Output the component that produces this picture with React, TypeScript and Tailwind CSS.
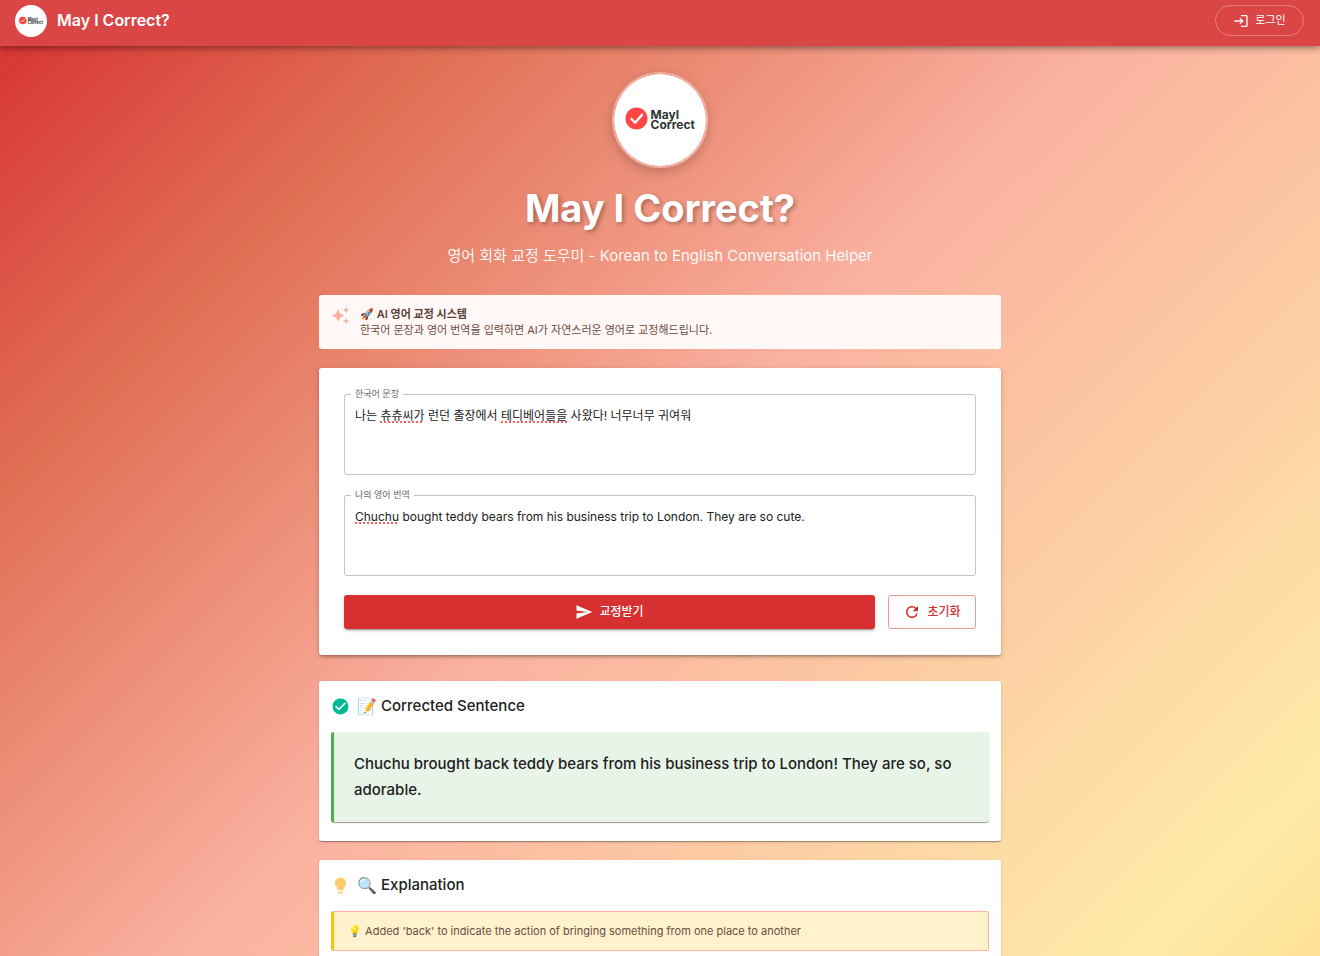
import React, { useState } from "react";
import { MdLogin, MdSend, MdRefresh, MdAutoAwesome, MdCheckCircle, MdLightbulb } from "react-icons/md";

const cardBase = "rounded-[3px] bg-white";
const lowShadow =
  "shadow-[0_2px_1px_-1px_rgba(0,0,0,0.2),0_1px_1px_0_rgba(0,0,0,0.14),0_1px_3px_0_rgba(0,0,0,0.12)]";
const highShadow =
  "shadow-[0_3px_3px_-2px_rgba(0,0,0,0.2),0_2px_3px_0_rgba(0,0,0,0.14),0_1px_6px_0_rgba(0,0,0,0.12)]";

function Logo({ className }: { className: string }) {
  return (
    <svg viewBox="0 0 92 92" className={className} role="img" aria-label="MayI Correct">
      <circle cx="46" cy="46" r="46" fill="#fff" />
      <circle cx="22.500" cy="44.500" r="11" fill="#ff4646" />
      <path d="M17.500 45l3.600 3.700 7-8" fill="none" stroke="#fff" strokeWidth="2.200" strokeLinecap="round" strokeLinejoin="round" />
      <text y="45" fontFamily="Inter, sans-serif" fontWeight="700" fontSize="12" fill="#2d3436">
        <tspan x="36.500">MayI</tspan>
        <tspan x="36.500" dy="10">Correct</tspan>
      </text>
    </svg>
  );
}

type Segment = { text: string; flagged?: boolean };

function Field({ id, label, segments }: { id: string; label: string; segments: Segment[] }) {
  const initial = segments.map((s) => s.text).join("");
  const [value, setValue] = useState(initial);
  return (
    <fieldset className="rounded-[3px] border border-[#c4c4c4] px-[10px]">
      <legend className="-ml-1 px-[4px] text-[9px] leading-[14px] text-[#666]">
        <label htmlFor={id}>{label}</label>
      </legend>
      <div className="relative mt-[6px] mb-[10px] h-[57px] text-[12px] leading-[18px]">
        <div aria-hidden="true" className="absolute inset-0 whitespace-pre-wrap text-transparent select-none">
          {value === initial &&
            segments.map((s, i) => (
              <span key={i} className={s.flagged ? "underline decoration-[#ff5c5c] decoration-dotted decoration-2 underline-offset-1" : ""}>
                {s.text}
              </span>
            ))}
        </div>
        <textarea
          id={id}
          value={value}
          spellCheck={false}
          onChange={(e) => setValue(e.target.value)}
          className="relative block h-full w-full resize-none bg-transparent text-[#212121] outline-none"
        />
      </div>
    </fieldset>
  );
}

export default function App() {
  return (
    <div className="flex h-screen flex-col bg-[linear-gradient(135deg,#d63031_0%,#e17055_22%,#fab1a0_50%,#ffeaa7_92%,#fdcb6e_119%)] font-[Inter,'Noto_Sans_CJK_KR',sans-serif] text-[#212121]">
      <header className="relative flex h-[46px] shrink-0 items-start justify-between bg-[#da4545] pt-[5px] pr-4 pl-[15px] text-white shadow-[0_2px_4px_-1px_rgba(0,0,0,0.2),0_4px_5px_0_rgba(0,0,0,0.14),0_1px_10px_0_rgba(0,0,0,0.12)]">
        <div className="flex items-start gap-[10px]">
          <Logo className="size-8" />
          <span className="text-[16px] leading-[30px] font-semibold">May I Correct?</span>
        </div>
        <button className="flex h-[31px] w-[89px] items-center justify-center gap-[6px] rounded-full border border-white/30 text-[11px]">
          <MdLogin className="size-4" />
          로그인
        </button>
      </header>

      <main className="min-h-0 flex-1 overflow-y-auto px-6 [scrollbar-width:none]">
        <div className="mx-auto flex w-full max-w-[682px] flex-col">
          <div className="flex flex-col items-center pt-[26px] text-white">
            <Logo className="size-24 rounded-full border-2 border-white/30 shadow-[0_4px_12px_rgba(0,0,0,0.2)]" />
            <h1 className="mt-4 text-[38px] leading-[48px] font-bold [text-shadow:2px_2px_4px_rgba(0,0,0,0.3)]">May I Correct?</h1>
            <p className="mt-3 text-[15px] leading-6 text-white/95">영어 회화 교정 도우미 - Korean to English Conversation Helper</p>
          </div>

          <section className="mt-[27px] flex gap-[10px] rounded-[3px] bg-[#fff8f6] px-3 py-[11px] text-[11px] leading-4 text-[#5d4037]">
            <MdAutoAwesome className="size-[19px] text-[#fab1a0]" />
            <div>
              <p className="font-semibold">🚀 AI 영어 교정 시스템</p>
              <p className="text-[#6d4c41]">한국어 문장과 영어 번역을 입력하면 AI가 자연스러운 영어로 교정해드립니다.</p>
            </div>
          </section>

          <form className={`${cardBase} ${highShadow} mt-[19px] flex flex-col px-[25px] pt-[19px] pb-[26px]`} onSubmit={(e) => e.preventDefault()}>
            <Field
              id="korean"
              label="한국어 문장"
              segments={[
                { text: "나는 " },
                { text: "츄츄씨가", flagged: true },
                { text: " 런던 출장에서 " },
                { text: "테디베어들을", flagged: true },
                { text: " 사왔다! 너무너무 귀여워" },
              ]}
            />
            <div className="mt-[13px]">
              <Field
                id="english"
                label="나의 영어 번역"
                segments={[
                  { text: "Chuchu", flagged: true },
                  { text: " bought teddy bears from his business trip to London. They are so cute." },
                ]}
              />
            </div>
            <div className="mt-[19px] flex gap-[13px] text-[12px] font-medium">
              <button type="submit" className="flex h-[34px] flex-1 items-center justify-center gap-[6px] rounded-[3px] bg-[#d63031] text-white shadow-[0_3px_1px_-2px_rgba(0,0,0,0.2),0_2px_2px_0_rgba(0,0,0,0.14),0_1px_5px_0_rgba(0,0,0,0.12)]">
                <MdSend className="size-[18px]" />
                교정받기
              </button>
              <button type="reset" className="flex h-[34px] w-[88px] items-center justify-center gap-[6px] rounded-[3px] border border-[#d63031]/50 text-[#d63031]">
                <MdRefresh className="size-[18px]" />
                초기화
              </button>
            </div>
          </form>

          <section className={`${cardBase} ${lowShadow} mt-[26px] px-3 pt-3 pb-[19px]`}>
            <h2 className="flex items-center text-[15px] leading-[26px] font-medium">
              <MdCheckCircle className="mr-[7px] size-[19px] text-[#00b894]" />
              <span className="mr-1 text-[16px]">📝</span>
              Corrected Sentence
            </h2>
            <p className="mt-[13px] rounded-[3px] border-l-[3px] border-[#4caf50] bg-[#e9f4e9] px-5 py-[19px] text-[15px] leading-[26px] font-medium shadow-[0_1px_1px_rgba(0,0,0,0.4)]">
              Chuchu brought back teddy bears from his business trip to London! They are so, so adorable.
            </p>
          </section>

          <section className={`${cardBase} ${lowShadow} mt-[19px] px-3 pt-3 pb-[19px]`}>
            <h2 className="flex items-center text-[15px] leading-[26px] font-medium">
              <MdLightbulb className="mr-[7px] size-[19px] text-[#fdcb6e]" />
              <span className="mr-1 text-[16px]">🔍</span>
              Explanation
            </h2>
            <p className="mt-[13px] rounded-[3px] border border-l-[3px] border-[#fab1a0] border-l-[#ffc107] bg-[#fff2cc] px-[14px] py-[11px] text-[11px] leading-4 text-[#6d4c41]">
              💡 Added 'back' to indicate the action of bringing something from one place to another
            </p>
          </section>
        </div>
      </main>
    </div>
  );
}
